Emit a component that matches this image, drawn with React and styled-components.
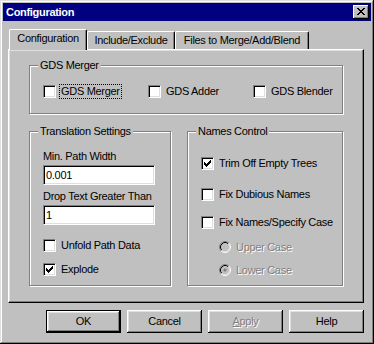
import React from 'react';
import styled, { createGlobalStyle } from 'styled-components';

// Win9x palette
const FACE = '#c0c0c0';
const LIGHT = '#dfdfdf';
const SHADOW = '#808080';

const GlobalStyle = createGlobalStyle`
  html, body {
    margin: 0;
    padding: 0;
    background: ${FACE};
  }
  body {
    font-family: "Liberation Sans", Arial, sans-serif;
    font-size: 11px;
    line-height: 13px;
    letter-spacing: -0.3px;
    color: #000;
  }
`;

const CheckMark = () => (
  <svg width="7" height="7" viewBox="0 0 7 7" shapeRendering="crispEdges">
    <path
      d="M0 2h1v3h-1z M1 3h1v3h-1z M2 4h1v3h-1z M3 3h1v3h-1z M4 2h1v3h-1z M5 1h1v3h-1z M6 0h1v3h-1z"
      fill="#000"
    />
  </svg>
);

const CloseGlyph = () => (
  <svg width="8" height="7" viewBox="0 0 8 7" shapeRendering="crispEdges">
    <path
      d="M0 0h2v1h-2z M6 0h2v1h-2z M1 1h2v1h-2z M5 1h2v1h-2z M2 2h4v1h-4z M3 3h2v1h-2z M2 4h4v1h-4z M1 5h2v1h-2z M5 5h2v1h-2z M0 6h2v1h-2z M6 6h2v1h-2z"
      fill="#000"
    />
  </svg>
);

const RadioDot = ({ checked }) => (
  <svg width="12" height="12" viewBox="0 0 12 12">
    <circle cx="6" cy="6" r="4.5" fill={FACE} />
    <path d="M2.11 9.89 A5.5 5.5 0 0 1 9.89 2.11" stroke={SHADOW} fill="none" />
    <path d="M9.89 2.11 A5.5 5.5 0 0 1 2.11 9.89" stroke="#fff" fill="none" />
    <path d="M2.82 9.18 A4.5 4.5 0 0 1 9.18 2.82" stroke="#000" fill="none" />
    <path d="M9.18 2.82 A4.5 4.5 0 0 1 2.82 9.18" stroke={LIGHT} fill="none" />
    {checked && <circle cx="6" cy="6" r="1.6" fill={SHADOW} />}
  </svg>
);

const Dialog = () => {
  return (
    <Window>
      <TitleBar>
        <Title>Configuration</Title>
        <CloseButton><CloseGlyph /></CloseButton>
      </TitleBar>

      <Body>
        <TabRow>
          <Tab $w={78} $active>Configuration</Tab>
          <Tab $w={88}>Include/Exclude</Tab>
          <Tab $w={134}>Files to Merge/Add/Blend</Tab>
        </TabRow>

        <Panel>
          <Group $w={314} $h={49} $pad="18px 0 0 13px">
            <Legend>GDS Merger</Legend>
            <MergerRow>
              <CheckItem $w={105}>
                <CheckBox />
                <CheckText $focus>GDS Merger</CheckText>
              </CheckItem>
              <CheckItem $w={105}>
                <CheckBox />
                <CheckText>GDS Adder</CheckText>
              </CheckItem>
              <CheckItem>
                <CheckBox />
                <CheckText>GDS Blender</CheckText>
              </CheckItem>
            </MergerRow>
          </Group>

          <Columns>
            <Group $w={142} $h={155} $pad="18px 0 0 13px">
              <Legend>Translation Settings</Legend>
              <FieldLabel>Min. Path Width</FieldLabel>
              <TextField defaultValue="0.001" />
              <FieldLabel $mt={5}>Drop Text Greater Than</FieldLabel>
              <TextField defaultValue="1" />
              <CheckItem $mt={13}>
                <CheckBox />
                <CheckText>Unfold Path Data</CheckText>
              </CheckItem>
              <CheckItem $mt={9}>
                <CheckBox><CheckMark /></CheckBox>
                <CheckText>Explode</CheckText>
              </CheckItem>
            </Group>

            <Group $w={156} $h={155} $pad="24px 0 0 13px">
              <Legend>Names Control</Legend>
              <CheckItem>
                <CheckBox><CheckMark /></CheckBox>
                <CheckText>Trim Off Empty Trees</CheckText>
              </CheckItem>
              <CheckItem $mt={16}>
                <CheckBox />
                <CheckText>Fix Dubious Names</CheckText>
              </CheckItem>
              <CheckItem $mt={13}>
                <CheckBox />
                <CheckText>Fix Names/Specify Case</CheckText>
              </CheckItem>
              <CheckItem $mt={10} $indent={18} $disabled>
                <RadioBox><RadioDot /></RadioBox>
                <CheckText>Upper Case</CheckText>
              </CheckItem>
              <CheckItem $mt={8} $indent={18} $disabled>
                <RadioBox><RadioDot checked /></RadioBox>
                <CheckText>Lower Case</CheckText>
              </CheckItem>
            </Group>
          </Columns>
        </Panel>

        <ButtonRow>
          <Button $default>OK</Button>
          <Button>Cancel</Button>
          <Button disabled><u>A</u>pply</Button>
          <Button>Help</Button>
        </ButtonRow>
      </Body>
    </Window>
  );
};

const App = () => (
  <>
    <GlobalStyle />
    <Dialog />
  </>
);

const Window = styled.div`
  box-sizing: border-box;
  width: 374px;
  height: 344px;
  padding: 3px;
  background: ${FACE};
  box-shadow: inset -1px -1px #000, inset 1px 1px ${LIGHT},
    inset -2px -2px ${SHADOW}, inset 2px 2px #fff;
  display: flex;
  flex-direction: column;
`;

const TitleBar = styled.div`
  height: 18px;
  flex: none;
  background: #000080;
  display: flex;
  align-items: center;
  justify-content: space-between;
  padding: 0 2px 0 3px;
`;

const Title = styled.span`
  color: #fff;
  font-weight: bold;
`;

const CloseButton = styled.div`
  box-sizing: border-box;
  width: 16px;
  height: 14px;
  background: ${FACE};
  box-shadow: inset -1px -1px #000, inset 1px 1px #fff, inset -2px -2px ${SHADOW};
  display: flex;
  align-items: center;
  justify-content: center;
  padding: 0 0 1px 0;
`;

const Body = styled.div`
  display: flex;
  flex-direction: column;
  padding: 8px 7px 0 5px;
`;

const TabRow = styled.div`
  display: flex;
  align-items: flex-end;
  height: 20px;
  padding-left: 1px;
  position: relative;
  z-index: 1;
`;

const Tab = styled.div`
  box-sizing: border-box;
  width: ${(p) => p.$w}px;
  height: ${(p) => (p.$active ? 21 : 18)}px;
  margin-bottom: ${(p) => (p.$active ? -1 : 0)}px;
  border-top: 1px solid #fff;
  border-left: 1px solid #fff;
  border-right: 1px solid #000;
  border-radius: 2px 2px 0 0;
  box-shadow: inset -1px 0 ${SHADOW};
  background: ${FACE};
  display: flex;
  justify-content: center;
  align-items: center;
  padding-bottom: ${(p) => (p.$active ? 3 : 0)}px;
  white-space: nowrap;
`;

const Panel = styled.div`
  box-sizing: border-box;
  width: 356px;
  height: 254px;
  border: 1px solid;
  border-color: #fff #000 #000 #fff;
  box-shadow: inset -1px -1px ${SHADOW}, inset 1px 1px ${LIGHT};
  padding: 15px 0 0 20px;
`;

const Group = styled.div`
  position: relative;
  box-sizing: border-box;
  width: ${(p) => p.$w}px;
  height: ${(p) => p.$h}px;
  border: 1px solid ${SHADOW};
  box-shadow: inset 1px 1px #fff, 1px 1px #fff;
  padding: ${(p) => p.$pad};
  display: flex;
  flex-direction: column;
  align-items: flex-start;
`;

const Legend = styled.span`
  position: absolute;
  top: -7px;
  left: 8px;
  padding: 0 2px;
  background: ${FACE};
`;

const MergerRow = styled.div`
  display: flex;
`;

const Columns = styled.div`
  display: flex;
  gap: 16px;
  margin-top: 17px;
`;

const CheckItem = styled.div`
  display: flex;
  align-items: center;
  gap: 3px;
  width: ${(p) => (p.$w ? `${p.$w}px` : 'auto')};
  margin-top: ${(p) => p.$mt || 0}px;
  margin-left: ${(p) => p.$indent || 0}px;
  color: ${(p) => (p.$disabled ? SHADOW : '#000')};
  text-shadow: ${(p) => (p.$disabled ? '1px 1px #fff' : 'none')};
  white-space: nowrap;
`;

const CheckBox = styled.span`
  box-sizing: border-box;
  width: 13px;
  height: 13px;
  flex: none;
  background: #fff;
  border: 1px solid;
  border-color: ${SHADOW} #fff #fff ${SHADOW};
  box-shadow: inset 1px 1px #000, inset -1px -1px ${LIGHT};
  display: flex;
  padding: 2px 0 0 2px;
`;

const RadioBox = styled.span`
  width: 12px;
  height: 13px;
  flex: none;
  display: flex;
  align-items: flex-start;
`;

const CheckText = styled.span`
  border: 1px ${(p) => (p.$focus ? 'dotted #000' : 'solid transparent')};
  padding: 0 1px;
  line-height: 13px;
`;

const FieldLabel = styled.div`
  margin-top: ${(p) => p.$mt || 0}px;
  line-height: 13px;
`;

const TextField = styled.input`
  box-sizing: border-box;
  width: 112px;
  height: 20px;
  margin: 2px 0 0 0;
  border: 1px solid;
  border-color: ${SHADOW} #fff #fff ${SHADOW};
  box-shadow: inset 1px 1px #000, inset -1px -1px ${LIGHT};
  background: #fff;
  font: inherit;
  letter-spacing: inherit;
  color: #000;
  padding: 0 2px;
  outline: none;
`;

const ButtonRow = styled.div`
  display: flex;
  justify-content: flex-end;
  gap: 6px;
  margin-top: 7px;
`;

const Button = styled.button`
  box-sizing: border-box;
  width: 75px;
  height: 23px;
  padding: 0;
  font: inherit;
  letter-spacing: inherit;
  color: #000;
  background: ${FACE};
  border: ${(p) => (p.$default ? '1px solid #000' : 'none')};
  box-shadow: inset -1px -1px #000, inset 1px 1px #fff, inset -2px -2px ${SHADOW},
    inset 2px 2px ${LIGHT};
  &:disabled {
    color: ${SHADOW};
    text-shadow: 1px 1px #fff;
  }
`;

export default App;
